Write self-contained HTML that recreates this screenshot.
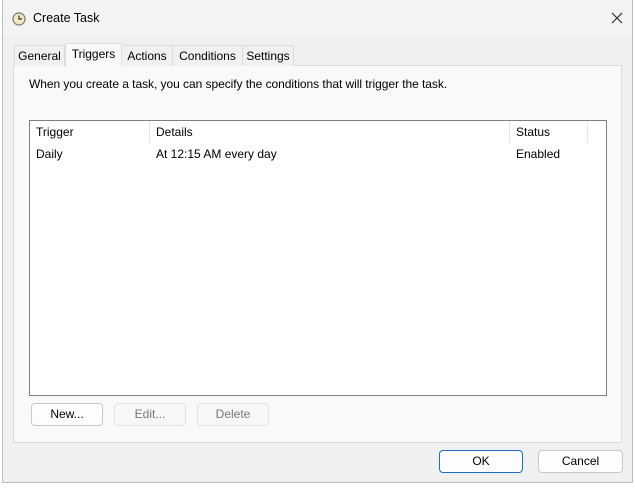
<!DOCTYPE html><html><head><style>
body{margin:0;width:635px;height:488px;background:#fff;position:relative;overflow:hidden;font-family:"Liberation Sans",sans-serif;font-size:12px;color:#000}
.a{position:absolute}
.win{left:2px;top:0;width:629px;height:482px;border:1px solid #bdbdbd;border-top:none;background:#f0f0f0}
.btn{position:absolute;height:21px;border:1px solid #c8c8c8;border-radius:4px;background:#fdfdfd;text-align:center;line-height:21px;box-sizing:content-box}
.tab{position:absolute;top:45px;height:20px;line-height:20px;border:1px solid #dcdcdc;border-bottom:none;background:#f0f0f0;text-align:center}
</style></head><body>
<div class="a win"></div>
<div class="a" style="left:3px;top:0;width:629px;height:36px;background:#f3f3f3"></div>
<svg class="a" style="left:12px;top:12px" width="14" height="14"><circle cx="7" cy="7" r="6" fill="#f4e8c0" stroke="#777" stroke-width="1.2"/><path d="M7 3.5V7H10" stroke="#333" stroke-width="1.2" fill="none"/></svg>
<div class="a" style="left:33px;top:11px;font-size:12.5px">Create Task</div>
<svg class="a" style="left:611px;top:12px" width="12" height="12"><path d="M1 1L11 11M11 1L1 11" stroke="#222" stroke-width="1.1"/></svg>
<div class="a" style="left:13px;top:65px;width:607px;height:376px;background:#f9f9f9;border:1px solid #dcdcdc"></div>
<div class="tab" style="left:14px;width:49px">General</div>
<div class="tab" style="left:65px;top:43px;height:23px;line-height:21px;width:55px;background:#f9f9f9;z-index:2">Triggers</div>
<div class="tab" style="left:121px;width:50px">Actions</div>
<div class="tab" style="left:172px;width:69px">Conditions</div>
<div class="tab" style="left:242px;width:50px">Settings</div>
<div class="a" style="left:29px;top:77px;letter-spacing:-0.05px">When you create a task, you can specify the conditions that will trigger the task.</div>
<div class="a" style="left:29px;top:120px;width:576px;height:274px;background:#fff;border:1px solid #808080"></div>
<div class="a" style="left:149px;top:121px;width:1px;height:22px;background:#e5e5e5"></div>
<div class="a" style="left:509px;top:121px;width:1px;height:22px;background:#e5e5e5"></div>
<div class="a" style="left:587px;top:121px;width:1px;height:22px;background:#e5e5e5"></div>
<div class="a" style="left:36px;top:125px">Trigger</div>
<div class="a" style="left:156px;top:125px">Details</div>
<div class="a" style="left:516px;top:125px">Status</div>
<div class="a" style="left:36px;top:147px">Daily</div>
<div class="a" style="left:156px;top:147px">At 12:15 AM every day</div>
<div class="a" style="left:516px;top:147px">Enabled</div>
<div class="btn" style="left:31px;top:403px;width:70px">New...</div>
<div class="btn" style="left:114px;top:403px;width:70px;color:#777;border-color:#e2e2e2;background:#f7f7f7">Edit...</div>
<div class="btn" style="left:197px;top:403px;width:70px;color:#777;border-color:#e2e2e2;background:#f7f7f7">Delete</div>
<div class="btn" style="left:439px;top:450px;width:82px;border-color:#1b6ec2">OK</div>
<div class="btn" style="left:538px;top:450px;width:83px">Cancel</div>
</body></html>
